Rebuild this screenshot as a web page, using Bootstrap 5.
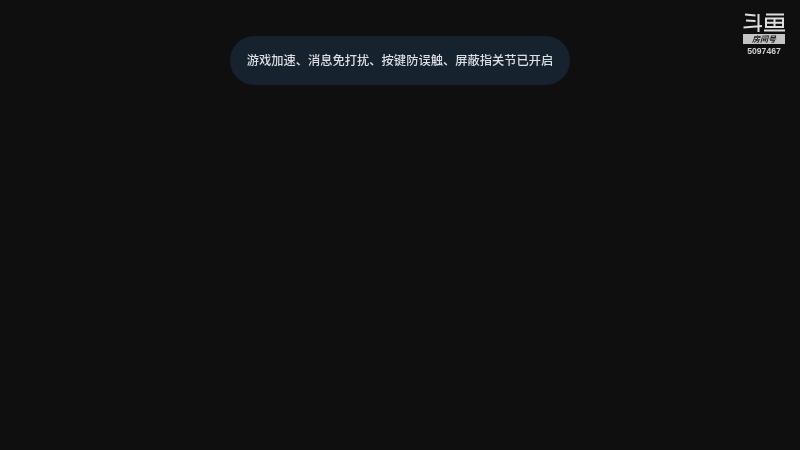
<!DOCTYPE html>
<html lang="zh">
<head>
<meta charset="utf-8">
<title>Toast</title>
<link href="https://cdn.jsdelivr.net/npm/bootstrap@5.3.0/dist/css/bootstrap.min.css" rel="stylesheet">
<style>
html, body { height: 100%; }
body { background: #0f0f10; overflow: hidden; position: relative; font-family: "Noto Sans CJK SC", sans-serif; }
.stage { padding-top: 36px; }
.toast-pill { width: 340px; height: 49px; background: #16222d; border-radius: 24.5px; color: #dcdfe2; font-size: 12.28px; font-weight: 500; line-height: 1; white-space: nowrap; filter: blur(.4px); }
.wm { position: absolute; left: 743px; top: 13px; width: 44px; color: #d8d8d8; filter: blur(.45px); }
.wm svg { display: block; }
.wm-room { background: #c4c4c4; color: #1a1a1a; height: 10px; margin-top: 2px; font-size: 8px; line-height: 10px; font-style: italic; font-weight: 700; width: 42px; }
.wm-id { font-family: "Liberation Sans", sans-serif; font-weight: 700; font-size: 8.6px; line-height: 10px; color: #d2d2d2; margin-top: 2px; padding-right: 2px; }
</style>
</head>
<body>
<main class="stage d-flex justify-content-center">
  <div class="toast-pill d-flex align-items-center justify-content-center">游戏加速、消息免打扰、按键防误触、屏蔽指关节已开启</div>
</main>
<div class="wm text-center">
  <svg width="44" height="19" viewBox="0 0 44 19" fill="none" stroke="#dedede" stroke-width="2">
    <path d="M2 1.5 L12.5 2.5 M3 7.5 L12.5 8 M0.5 14.5 L19 13 M15.5 1 V19"/>
    <path d="M23 1.5 H41 M23 5.5 H40 V14 H23 Z M31.5 5.5 V14 M23 9.8 H40 M21 17.5 H42"/>
  </svg>
  <div class="wm-room">房间号</div>
  <div class="wm-id">5097467</div>
</div>
</body>
</html>
